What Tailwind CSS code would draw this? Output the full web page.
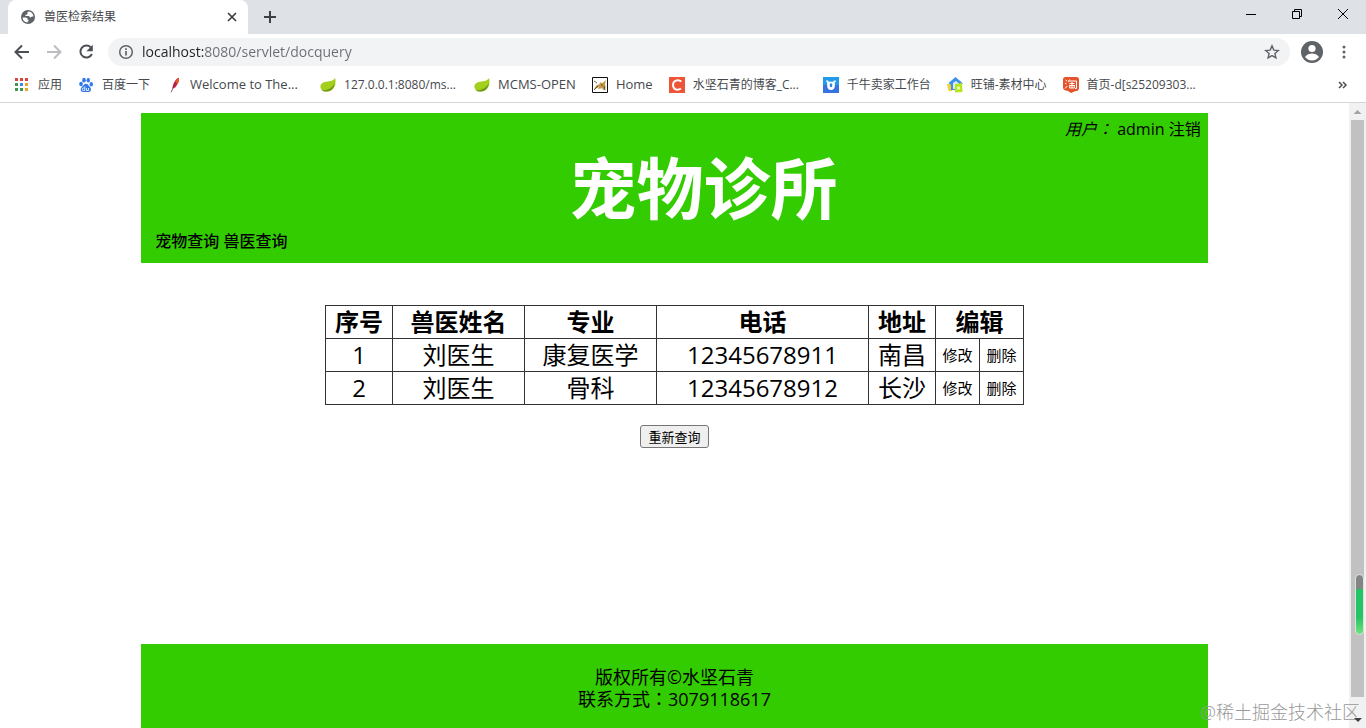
<!DOCTYPE html>
<html lang="zh-CN">
<head>
    <meta charset="UTF-8">
    <meta name="viewport" content="width=device-width, initial-scale=1.0">
    <title>兽医检索结果</title>
    <script src="https://cdn.jsdelivr.net/npm/@tailwindcss/browser@4"></script>
</head>
<body class="h-screen flex flex-col overflow-hidden bg-white text-black font-['Open_Sans','Noto_Sans_CJK_SC',sans-serif]">
    <!-- Tab strip -->
    <div class="flex h-[34px] shrink-0 bg-[#dee1e6] pl-2">
        <div class="flex items-center w-60 rounded-t-lg bg-white pl-3 pr-2">
            <svg class="w-4 h-4 shrink-0" viewBox="0 0 16 16">
                <circle cx="8" cy="8" r="7" fill="#5f6368"/>
                <path d="M9 2.6c-1.5.1-2 1-1.500 1.900.3.8-.9 1.200-1.800 1.300-.8.2-.6 1.200.3 1.200h2.500c1 0 1 1.500 2 1.500.8 0 .8-1 1.700-1h1.200a5.500 5.500 0 0 0-4.400-4.900zM2.600 8.500h3.200c1.200 0 1.800.8 1.800 1.700 0 .7 1 .5 1 1.300 0 .9-1.200.9-1.100 2A5.500 5.500 0 0 1 2.600 8.500z" fill="#fff"/>
            </svg>
            <span class="flex-1 pl-2 text-xs text-[#45494d]">兽医检索结果</span>
            <button type="button" aria-label="关闭标签页" class="w-4 h-4">
                <svg viewBox="0 0 16 16" fill="none" stroke="#3c4043" stroke-width="1.700"><path d="M4 4l8 8M12 4l-8 8"/></svg>
            </button>
        </div>
        <button type="button" aria-label="新标签页" class="ml-3.5 w-4">
            <svg viewBox="0 0 16 16" fill="none" stroke="#3c4043" stroke-width="2"><path d="M8 2v12M2 8h12"/></svg>
        </button>
        <div class="ml-auto flex h-7">
            <button type="button" aria-label="最小化" class="w-[46px] flex items-center justify-center">
                <svg class="w-3 h-3" viewBox="0 0 12 12" stroke="#000"><path d="M1 6.500h10"/></svg>
            </button>
            <button type="button" aria-label="还原" class="w-[46px] flex items-center justify-center">
                <svg class="w-3 h-3" viewBox="0 0 12 12" fill="none" stroke="#000"><path d="M1.500 3.500h7v7h-7zM3.500 3.500v-2h7v7h-2"/></svg>
            </button>
            <button type="button" aria-label="关闭" class="w-[46px] flex items-center justify-center">
                <svg class="w-3 h-3" viewBox="0 0 12 12" stroke="#000"><path d="M1 1l10 10M11 1L1 11"/></svg>
            </button>
        </div>
    </div>

    <!-- Toolbar -->
    <div class="flex items-center h-9 shrink-0 pl-3 pr-3.5">
        <button type="button" aria-label="后退" class="w-5 h-5">
            <svg viewBox="0 0 20 20" fill="none" stroke="#4b4f53" stroke-width="2"><path d="M17 10H4M10 3.500L3.500 10l6.500 6.500"/></svg>
        </button>
        <button type="button" aria-label="前进" class="ml-3 w-5 h-5">
            <svg viewBox="0 0 20 20" fill="none" stroke="#bbbdc0" stroke-width="2"><path d="M3 10h13M10 3.500l6.500 6.500-6.500 6.500"/></svg>
        </button>
        <button type="button" aria-label="重新加载" class="ml-3 w-5 h-5">
            <svg viewBox="0 0 20 20"><path d="M14.700 5.300A6 6 0 1 0 15.900 12" fill="none" stroke="#4b4f53" stroke-width="2"/><path d="M16.800 2.800v6.400h-6.400z" fill="#4b4f53"/></svg>
        </button>
        <div class="ml-3 flex flex-1 items-center h-7 rounded-full bg-[#f1f3f4] px-2.5">
            <svg class="w-4 h-4 shrink-0" viewBox="0 0 16 16" fill="none" stroke="#5f6368" stroke-width="1.500"><circle cx="8" cy="8" r="6.300"/><path d="M8 7v4.500M8 4.300v1.600" stroke-width="1.700"/></svg>
            <input type="text" aria-label="地址栏" value="localhost:8080/servlet/docquery" class="ml-2 flex-1 min-w-0 text-sm outline-none text-transparent bg-clip-text bg-[linear-gradient(90deg,#202124_61px,#6a6e73_61px)]">
            <button type="button" aria-label="收藏" class="w-4 h-4">
                <svg viewBox="0 0 16 16" fill="none" stroke="#5f6368" stroke-width="1.400"><path d="M8 1.900l1.800 4.200 4.500.4-3.400 3 1 4.400L8 11.600l-3.900 2.300 1-4.400-3.400-3 4.500-.4z"/></svg>
            </button>
        </div>
        <button type="button" aria-label="用户" class="ml-2.5 w-6 h-6">
            <svg viewBox="0 0 24 24"><circle cx="12" cy="12" r="11" fill="#5f6368"/><circle cx="12" cy="8.500" r="3.600" fill="#fff"/><path d="M5 17c1.500-2.500 4.500-3.500 7-3.500s5.500 1 7 3.500c-1.500 2-4 3.400-7 3.400S6.500 19 5 17z" fill="#fff"/></svg>
        </button>
        <button type="button" aria-label="菜单" class="ml-3 w-4 h-4">
            <svg viewBox="0 0 16 16" fill="#5f6368"><circle cx="8" cy="3" r="1.500"/><circle cx="8" cy="8" r="1.500"/><circle cx="8" cy="13" r="1.500"/></svg>
        </button>
    </div>

    <!-- Bookmarks -->
    <div class="flex items-center h-[33px] shrink-0 border-b border-[#d5d6d8] pl-3.5 pr-4 pb-0.5 text-xs text-[#45494d] whitespace-nowrap">
        <div class="flex flex-1 gap-4">
            <a href="#" class="flex items-center gap-2">
                <svg class="w-4 h-4" viewBox="0 0 16 16"><path d="M1 1h3v3H1zM6 1h3v3H6zM11 1h3v3h-3z" fill="#d9453c"/><path d="M1 6h3v3H1zM1 11h3v3H1zM6 11h3v3H6z" fill="#3c9a53"/><path d="M6 6h3v3H6z" fill="#4285f4"/><path d="M11 6h3v3h-3zM11 11h3v3h-3z" fill="#e5ab20"/></svg>
                应用
            </a>
            <a href="#" class="flex items-center gap-2">
                <svg class="w-4 h-4" viewBox="0 0 16 16" fill="#3379e8"><ellipse cx="3" cy="7" rx="1.800" ry="2.200"/><ellipse cx="6" cy="3.200" rx="1.800" ry="2.400"/><ellipse cx="10.300" cy="3.300" rx="1.700" ry="2.300"/><ellipse cx="13.300" cy="7.300" rx="1.700" ry="2.200"/><path d="M8 6.800c2 0 2.600 2 4 3.300 1.600 1.500 1.300 4.900-1.200 4.900-1.300 0-4.200-.2-5.500 0-2.800.3-3.300-3.200-1.600-4.700C5.300 8.900 6 6.800 8 6.800z"/><path d="M6.800 9.500v4H5.500a1.200 1.200 0 0 1 0-2.500h1.300M8.500 11v2.500h2V11" fill="none" stroke="#fff" stroke-width=".8"/></svg>
                百度一下
            </a>
            <a href="#" class="flex items-center gap-2">
                <svg class="w-4 h-4" viewBox="0 0 16 16"><path d="M12.500.8c1.200 2.500-.6 6.600-3.300 9.600L6.400 11.800c.2-4.200 2.300-9 6.100-11z" fill="#c8233f"/><path d="M12.500.8c1.200 2.500.2 4.500-.9 6L9 5.400c.8-1.900 1.800-3.600 3.500-4.600z" fill="#e0572f"/><path d="M10 5L5 15.300" stroke="#74305f" stroke-width=".8"/></svg>
                <span class="w-[114px] text-[13px]">Welcome to The...</span>
            </a>
            <a href="#" class="flex items-center gap-2">
                <svg class="w-4 h-4" viewBox="0 0 16 16"><path d="M15.200 1c1.200 6.500-.7 13.200-8 13.400-2 .1-4-.2-5.300-1.300C-.8 10 .2 5.900 4.600 5 8.600 4.200 12.500 4.600 15.200 1z" fill="#a4cf1c"/><path d="M1.500 13.400c5.500-.4 10.700-1.700 13.300-7.400-.6 4.600-2.900 8.200-7.800 8.400-2 .1-4.200 0-5.500-1z" fill="#6f9a12"/></svg>
                <span class="w-[114px]">127.0.0.1:8080/ms...</span>
            </a>
            <a href="#" class="flex items-center gap-2">
                <svg class="w-4 h-4" viewBox="0 0 16 16"><path d="M15.200 1c1.200 6.500-.7 13.200-8 13.400-2 .1-4-.2-5.300-1.300C-.8 10 .2 5.900 4.600 5 8.600 4.200 12.500 4.600 15.200 1z" fill="#a4cf1c"/><path d="M1.500 13.400c5.500-.4 10.700-1.700 13.300-7.400-.6 4.600-2.900 8.200-7.800 8.400-2 .1-4.200 0-5.500-1z" fill="#6f9a12"/></svg>
                <span class="text-[13px]">MCMS-OPEN</span>
            </a>
            <a href="#" class="flex items-center gap-2">
                <svg class="w-4 h-4" viewBox="0 0 16 16"><path d="M.5.500h15v15H.5z" fill="#fff" stroke="#111"/><path d="M2 12.500c1-3 3-5 5.500-5.200L8 5l2 1.300L14 3l-1 4.500c1.400 2.300 0 5.500-1 6l-2-2.300L6 12l1-2z" fill="#c39a4b"/><path d="M2 4l3 2M2 13l4-4M9 8h2M12 9l1 4" stroke="#4d3f23" stroke-width=".8"/></svg>
                <span class="text-[13px]">Home</span>
            </a>
            <a href="#" class="flex items-center gap-2">
                <svg class="w-4 h-4" viewBox="0 0 16 16"><path d="M0 0h16v16H0z" fill="#ee5538"/><path d="M12.300 4.600C9 2 4 3.400 4 8s4.500 6 8 3.500" fill="none" stroke="#fff" stroke-width="1.900"/></svg>
                <span class="w-[114px]">水坚石青的博客_C...</span>
            </a>
            <a href="#" class="flex items-center gap-2">
                <svg class="w-4 h-4" viewBox="0 0 16 16"><path d="M0 0h16v8H0z" fill="#2399ea"/><path d="M0 8h16v8H0z" fill="#3872dd"/><path d="M3 3.500c2-.3 2.600.2 2.700 1.200h4.600C10.400 3.700 11 3.200 13 3.500c-.2 1.300-.7 1.700-1.200 2V9c0 2.500-1.500 4-3.800 4S4.200 11.500 4.200 9V5.500c-.6-.3-1.100-.9-1.200-2z" fill="#fff"/><path d="M6.800 6.500V9c0 1.600 2.400 1.600 2.400 0V6.500z" fill="#2e86e4"/></svg>
                千牛卖家工作台
            </a>
            <a href="#" class="flex items-center gap-2">
                <svg class="w-4 h-4" viewBox="0 0 16 16"><path d="M0 7h5v7H1.500z" fill="#f6cf2d"/><path d="M8.500 0L16 6.500 13 8v5H4V8L1.500 6z" fill="#3c91ea"/><path d="M6 6l3-2 3 2.500V12H6z" fill="#d9ecf8"/><path d="M8 7l7-1 .5 9L8 15.500z" fill="#b4e61e"/><path d="M10 9.500h3v3h-3z" fill="#eaf9a8"/></svg>
                旺铺-素材中心
            </a>
            <a href="#" class="flex items-center gap-2">
                <svg class="w-4 h-4" viewBox="0 0 16 16"><path d="M2.500 0h11A2.500 2.500 0 0 1 16 2.500V11c0 2.500-1.500 3-4 3.200L8 16l-3-2C2 13.500 0 13 0 10V2.500A2.500 2.500 0 0 1 2.500 0z" fill="#e5532d"/><path d="M2.500 3l1.500 1M2 6l1.500 1M2 11.500L4.200 9M6.500 2.500L5 5M6 4h7.500v7.500H12M6.500 6.500h5M6 8.500h6M9 5v6M6.700 9v2h4.600V9" fill="none" stroke="#fff"/></svg>
                <span class="w-[114px]">首页-d[s25209303...</span>
            </a>
        </div>
        <button type="button" aria-label="更多书签" class="w-4 h-4">
            <svg viewBox="0 0 16 16" fill="none" stroke="#4b4f53" stroke-width="1.500"><path d="M5 5l3 3-3 3M9 5l3 3-3 3"/></svg>
        </button>
    </div>

    <!-- Page -->
    <div class="relative flex flex-1 min-h-0">
        <div class="flex-1 flex flex-col px-2 pt-2.5">
            <header class="mx-auto flex flex-col w-4/5 h-[150px] shrink-0 bg-[#33cc00]">
                <p class="pt-1 pr-[7px] text-right text-base leading-6"><i>用户<span lang="zh-TW">：</span></i> <a href="#">admin</a> <a href="#">注销</a></p>
                <h1 class="flex-1 pt-2 pl-[58px] text-center text-[67px] leading-[78px] font-bold text-white">宠物诊所</h1>
                <nav class="pl-3.5 pb-2.5 text-base leading-6 font-medium"><a href="#">宠物查询</a> <a href="#">兽医查询</a></nav>
            </header>

            <main class="flex-1 flex flex-col items-center pt-[42px]">
                <table class="table-fixed w-[699px] border-collapse text-center text-2xl leading-8 [&_th]:border [&_td]:border [&_th]:border-[#333] [&_td]:border-[#333]">
                    <colgroup>
                        <col class="w-[67px]">
                        <col class="w-[132px]">
                        <col class="w-[132px]">
                        <col class="w-[212px]">
                        <col class="w-[67px]">
                        <col class="w-11">
                        <col class="w-11">
                    </colgroup>
                    <thead>
                        <tr>
                            <th>序号</th>
                            <th>兽医姓名</th>
                            <th>专业</th>
                            <th>电话</th>
                            <th>地址</th>
                            <th colspan="2">编辑</th>
                        </tr>
                    </thead>
                    <tbody>
                        <tr>
                            <td>1</td>
                            <td>刘医生</td>
                            <td>康复医学</td>
                            <td>12345678911</td>
                            <td>南昌</td>
                            <td class="text-[15px]"><a href="#">修改</a></td>
                            <td class="text-[15px]"><a href="#">删除</a></td>
                        </tr>
                        <tr>
                            <td>2</td>
                            <td>刘医生</td>
                            <td>骨科</td>
                            <td>12345678912</td>
                            <td>长沙</td>
                            <td class="text-[15px]"><a href="#">修改</a></td>
                            <td class="text-[15px]"><a href="#">删除</a></td>
                        </tr>
                    </tbody>
                </table>
                <button type="button" class="mt-5 h-[23px] rounded-[3px] border border-[#767676] bg-[#efefef] px-[7px] text-[13px] leading-5">重新查询</button>
            </main>

            <footer class="mx-auto w-4/5 h-[84px] shrink-0 bg-[#33cc00] pt-[22px] text-center text-lg leading-[22px]">
                <p>版权所有©水坚石青</p>
                <p>联系方式<span lang="zh-TW">：</span>3079118617</p>
            </footer>
        </div>

        <!-- Scrollbar -->
        <div class="relative flex flex-col w-[17px] bg-[#f1f1f1]">
            <svg class="w-[17px] h-[17px]" viewBox="0 0 17 17"><path d="M4.500 11l4-4 4 4z" fill="#a3a3a3"/></svg>
            <div class="mx-0.5 flex-1 bg-[#c1c1c1]"></div>
            <div class="relative z-10 h-[31px] flex items-end justify-center pb-1.5">
                <svg class="w-2 h-1" viewBox="0 0 8 4"><path d="M0 0h8L4 4z" fill="#404040"/></svg>
            </div>
            <div class="absolute right-0.5 bottom-[93px] w-[9px] h-[61px] rounded-full border border-[#d4e8d8] bg-[linear-gradient(#848484_14px,#27c266_14px,#27c266_42px,#6fe37c)]"></div>
        </div>

        <p class="absolute right-1.5 bottom-1 text-lg leading-6 font-light text-[#989898] whitespace-nowrap">@稀土掘金技术社区</p>
    </div>
</body>
</html>
